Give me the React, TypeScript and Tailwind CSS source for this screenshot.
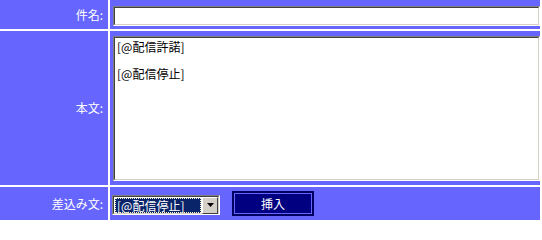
const font = { fontFamily: '"Noto Sans CJK JP", "Noto Sans", sans-serif' };

const Label = ({ children }: { children: string }) => (
  <div className="flex items-center justify-end bg-[#6666ff] pr-[5px] text-[12px] leading-none text-white">
    {children}
  </div>
);

const Inset = ({ className, children }: { className: string; children?: React.ReactNode }) => (
  <div
    className={`border border-t-[#808080] border-l-[#808080] border-b-white border-r-white ${className}`}
  >
    <div className="h-full w-full border border-t-[#404040] border-l-[#404040] border-b-[#d4d0c8] border-r-[#d4d0c8] bg-white">
      {children}
    </div>
  </div>
);

export default function App() {
  return (
    <div className="h-[220px] w-[542px] overflow-hidden bg-white" style={font}>
      <div className="grid w-[540px] grid-cols-[108px_430px] grid-rows-[29px_154px_33px] gap-[2px]">
        <Label>件名:</Label>
        <div className="bg-[#6666ff] pl-[3px] pt-[6px]">
          <Inset className="h-[20px] w-[427px]" />
        </div>

        <Label>本文:</Label>
        <div className="bg-[#6666ff] pl-[3px] pt-[5px]">
          <Inset className="h-[145px] w-[427px]">
            <textarea
              readOnly
              defaultValue={"[@配信許諾]\n\n[@配信停止]"}
              className="block h-full w-full resize-none overflow-hidden bg-white px-[2px] py-[2px] text-[12px] leading-[13.4px] text-black outline-none"
              style={font}
            />
          </Inset>
        </div>

        <Label>差込み文:</Label>
        <div className="flex items-start bg-[#6666ff] pl-[2px]">
          <div className="mt-[8px] h-[20px] w-[108px] border border-t-[#808080] border-l-[#808080] border-b-white border-r-white">
            <div className="flex h-full w-full items-center border border-t-[#404040] border-l-[#404040] border-b-[#d4d0c8] border-r-[#d4d0c8] bg-white pl-[1px]">
              <div className="h-[15px] min-w-0 flex-1 whitespace-nowrap bg-[#0a246a] pl-[2px] text-[12px] leading-[15px] text-white outline-1 outline-dotted outline-[#ffffcc] -outline-offset-1">
                [@配信停止]
              </div>
              <div className="ml-[1px] flex h-[17px] w-[16px] shrink-0 items-center justify-center border border-t-white border-l-white border-b-[#404040] border-r-[#404040] bg-[#d4d0c8]">
                <svg width="7" height="4" viewBox="0 0 7 4">
                  <polygon points="0,0 7,0 3.5,4" fill="#000" />
                </svg>
              </div>
            </div>
          </div>
          <button className="ml-[12px] mt-[4px] flex h-[25px] w-[82px] items-center justify-center border-2 border-[#000060] bg-[#000080] text-[12px] leading-none text-white outline-1 outline-[#6666ff] -outline-offset-3">
            挿入
          </button>
        </div>
      </div>
    </div>
  );
}
